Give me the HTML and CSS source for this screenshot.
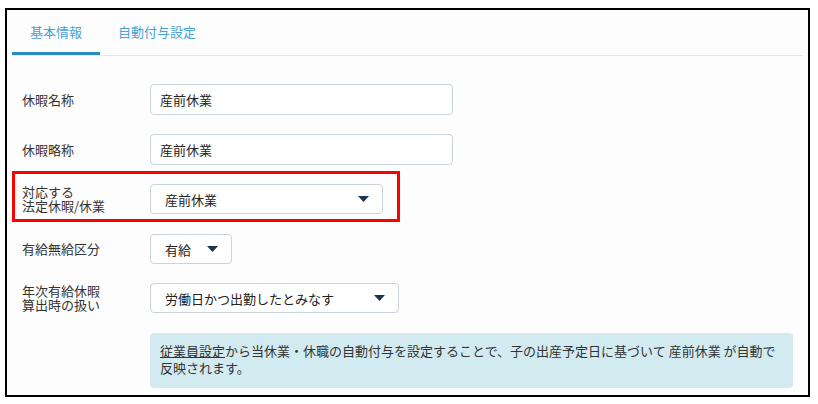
FILE: index.html
```html
<!DOCTYPE html>
<html lang="ja">
<head>
    <meta charset="UTF-8">
    <meta name="viewport" content="width=device-width, initial-scale=1.0">
    <title>休暇設定</title>
    <link rel="stylesheet" href="styles.css">
</head>
<body>
    <div class="frame">
        <nav class="tabs">
            <a href="#" class="tab active">基本情報</a>
            <a href="#" class="tab">自動付与設定</a>
        </nav>

        <form class="form">
            <div class="row">
                <label class="label">休暇名称</label>
                <input class="input" type="text" value="産前休業">
            </div>
            <div class="row row-gap">
                <label class="label">休暇略称</label>
                <input class="input" type="text" value="産前休業">
            </div>
            <div class="row highlight">
                <label class="label">対応する<br>法定休暇/休業</label>
                <div class="select select-legal">
                    <span>産前休業</span>
                    <svg class="caret" width="11" height="6" viewBox="0 0 11 6"><polygon points="0,0 11,0 5.5,6"/></svg>
                </div>
            </div>
            <div class="row row-select row-after">
                <label class="label">有給無給区分</label>
                <div class="select select-paid">
                    <span>有給</span>
                    <svg class="caret" width="11" height="6" viewBox="0 0 11 6"><polygon points="0,0 11,0 5.5,6"/></svg>
                </div>
            </div>
            <div class="row row-select row-gap">
                <label class="label">年次有給休暇<br>算出時の扱い</label>
                <div class="select select-annual">
                    <span>労働日かつ出勤したとみなす</span>
                    <svg class="caret" width="11" height="6" viewBox="0 0 11 6"><polygon points="0,0 11,0 5.5,6"/></svg>
                </div>
            </div>
            <div class="info">
                <a href="#">従業員設定</a>から当休業・休職の自動付与を設定することで、子の出産予定日に基づいて 産前休業 が自動で反映されます。
            </div>
        </form>
    </div>
</body>
</html>
```

FILE: styles.css
```css
:root {
    --tab-color: #4aa2d4;
    --tab-line: #2b8cc5;
    --text-color: #333333;
    --border-color: #c9d3dd;
    --caret-color: #1d3350;
    --info-bg: #d2ebf0;
}

* {
    margin: 0;
    padding: 0;
    box-sizing: border-box;
}

body {
    font-family: "Noto Sans CJK JP", "Noto Sans", sans-serif;
    font-size: 13px;
    color: var(--text-color);
    background-color: #ffffff;
}

.frame {
    width: 805px;
    height: 389px;
    margin: 8px 0 0 5px;
    border: 2px solid #000000;
    background-color: #fdfdfd;
}

.tabs {
    display: flex;
    margin: 0 5px 0 5px;
    border-bottom: 1px solid #e6e6e6;
}

.tab {
    display: block;
    height: 45px;
    padding: 14px 18px 0;
    color: var(--tab-color);
    text-decoration: none;
    line-height: 16px;
    border-bottom: 3px solid transparent;
}

.tab.active {
    border-bottom-color: var(--tab-line);
}

.form {
    padding-top: 28px;
}

/* rows keep a fixed height so two-line labels don't push things down */
.row {
    display: flex;
    align-items: center;
    height: 31px;
    margin-left: 5px;
    padding-left: 10px;
}

.row-select {
    height: 30px;
}

.row-gap {
    margin-top: 19px;
}

.row-after {
    margin-top: 12px;
}

.highlight {
    width: 388px;
    height: 51px;
    margin-top: 6px;
    padding: 5px 0 0 7px;
    border: 3px solid #ff0000;
}

.label {
    width: 128px;
    line-height: 14px;
    flex-shrink: 0;
}

.input {
    width: 303px;
    height: 31px;
    padding: 0 9px;
    font-family: inherit;
    font-size: 13px;
    color: #222222;
    background-color: #ffffff;
    border: 1px solid var(--border-color);
    border-radius: 4px;
}

.select {
    display: flex;
    align-items: center;
    justify-content: space-between;
    height: 30px;
    padding: 0 13px 0 14px;
    color: #222222;
    background-color: #ffffff;
    border: 1px solid var(--border-color);
    border-radius: 4px;
}

.select-legal {
    width: 233px;
}

.select-paid {
    width: 82px;
}

.select-annual {
    width: 249px;
}

.caret {
    fill: var(--caret-color);
}

.info {
    margin: 20px 15px 0 143px;
    padding: 9px 10px 12px;
    line-height: 17px;
    background-color: var(--info-bg);
    border-radius: 4px;
}

.info a {
    color: var(--text-color);
}
```
